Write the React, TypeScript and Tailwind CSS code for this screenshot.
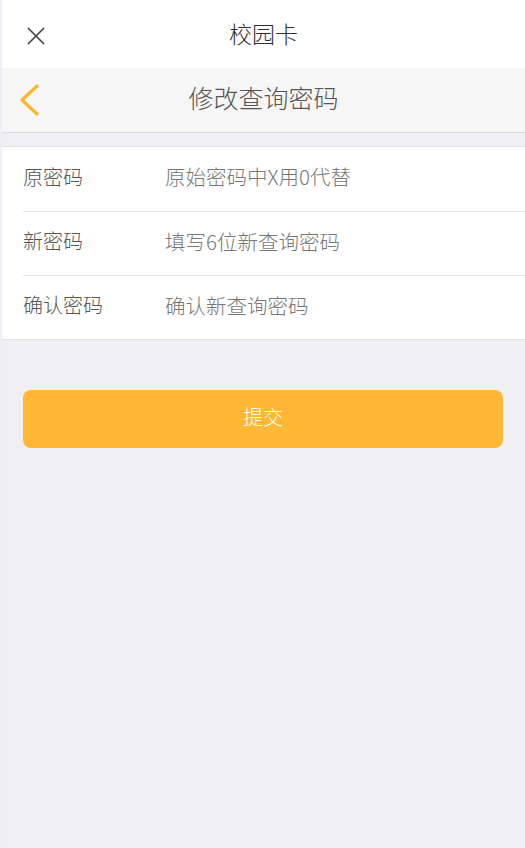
import { X } from 'lucide-react'

const CAMPOS = [
  { id: 'old', label: '原密码', placeholder: '原始密码中X用0代替' },
  { id: 'new', label: '新密码', placeholder: '填写6位新查询密码' },
  { id: 'confirm', label: '确认密码', placeholder: '确认新查询密码' },
]

const FUENTE = { fontFamily: '"Noto Sans CJK SC", "Noto Sans", sans-serif' }

export default function App() {
  return (
    <div style={FUENTE} className="min-h-[848px] w-[525px] bg-[#efeff4] border-l-2 border-[#eaf0f8] font-light">
      {/* Barra superior */}
      <div className="h-[68px] bg-white flex items-center relative">
        <button className="absolute left-[19px] top-[21px] text-[#444]">
          <X size={30} strokeWidth={1.4} />
        </button>
        <h1 className="flex-1 text-center text-[23px] text-[#2f2f2f] leading-none pb-[1px]">校园卡</h1>
      </div>

      {/* Cabecera */}
      <div className="h-[65px] bg-[#f6f6f6] border-b border-[#dcdcdc] flex items-center relative">
        <button className="absolute left-[16px] top-[16px]">
          <svg width="24" height="32" viewBox="0 0 24 32" fill="none">
            <polyline points="19,2 4,16 19,30" stroke="#fdb52e" strokeWidth="3.2" strokeLinecap="round" strokeLinejoin="round" />
          </svg>
        </button>
        <h2 className="flex-1 text-center text-[25px] text-[#555] leading-none pb-[5px]">修改查询密码</h2>
      </div>

      {/* Formulario */}
      <div className="mt-[13px] bg-white border-y border-[#e3e3e8]">
        {CAMPOS.map((campo, i) => (
          <div key={campo.id} className="pl-[21px]">
            <div className={`h-[64px] pb-[5px] flex items-center ${i > 0 ? 'border-t border-[#e8e8ec]' : ''}`}>
              <label className="w-[142px] text-[20px] text-[#555]">{campo.label}</label>
              <input
                type="password"
                placeholder={campo.placeholder}
                className="flex-1 bg-transparent text-[20.5px] text-[#333] placeholder:text-[#777] outline-none"
              />
            </div>
          </div>
        ))}
      </div>

      <div className="px-[21px] pt-[50px]">
        <button className="w-[480px] h-[58px] pb-[4px] rounded-[8px] bg-[#ffb833] text-white text-[20px]">
          提交
        </button>
      </div>
    </div>
  )
}
